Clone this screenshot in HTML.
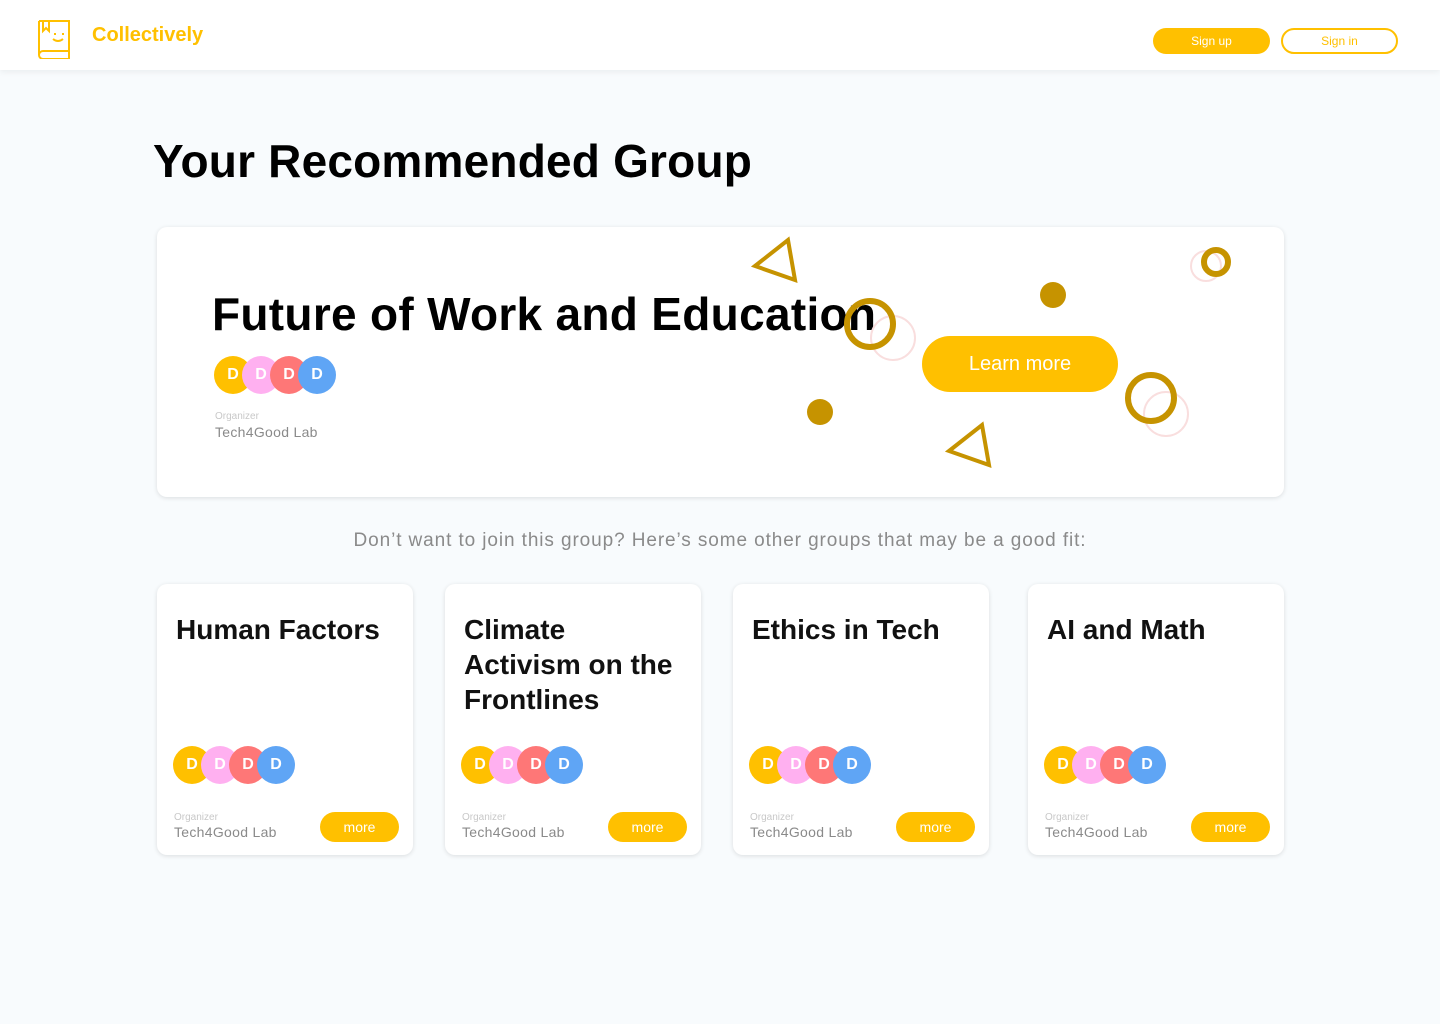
<!DOCTYPE html>
<html><head><style>
*{margin:0;padding:0;box-sizing:border-box}
body{width:1440px;height:1024px;background:#f8fbfd;font-family:"Liberation Sans",Roboto,sans-serif;position:relative;overflow:hidden}
.hdr{position:absolute;left:0;top:0;width:1440px;height:70px;background:#fff;box-shadow:0 2px 6px rgba(0,0,0,.06)}
.brand{position:absolute;left:92px;top:24px;color:#ffc000;font-size:20px;font-weight:bold}
.btn{position:absolute;border-radius:14px;font-size:12px;text-align:center;line-height:26px}
h1{position:absolute;left:153px;top:134px;font-size:46px;font-weight:bold;color:#000;letter-spacing:.2px}
.card{position:absolute;background:#fff;border-radius:10px;box-shadow:0 1px 5px rgba(0,0,0,.12)}
.av{position:absolute;width:38px;height:38px;border-radius:50%;color:#fff;font-weight:bold;font-size:16px;text-align:center;line-height:38px}
.org{position:absolute;font-size:10px;color:#c8c8c8}
.lab{position:absolute;font-size:14px;color:#8a8a8a;letter-spacing:.3px}
.ct{position:absolute;left:19px;top:28px;font-size:28px;font-weight:bold;line-height:35px;color:#111;width:215px}
.more{position:absolute;right:14px;top:228px;width:79px;height:30px;border-radius:15px;background:#ffc000;color:#fff;font-size:14px;text-align:center;line-height:30px}
</style></head><body>
<div class="hdr">
<svg style="position:absolute;left:37px;top:19px" width="34" height="40" viewBox="0 0 34 40" fill="none" stroke="#ffc000" stroke-width="2"><path d="M2 2h30v30H6a4 4 0 0 0 0 8h26v-8M2 2v34"/><path d="M6 2v10l3-3 3 3V2"/><path d="M18 14v2M26 14v2M16 20q5 4 10 0"/></svg>
<div class="brand">Collectively</div>
<div class="btn" style="left:1153px;top:28px;width:117px;height:26px;background:#ffc000;color:#fff">Sign up</div>
<div class="btn" style="left:1281px;top:28px;width:117px;height:26px;border:2px solid #ffc000;color:#ffc000;line-height:22px">Sign in</div>
</div>
<h1>Your Recommended Group</h1>
<div class="card" style="left:157px;top:227px;width:1127px;height:270px">
<div style="position:absolute;left:55px;top:60px;font-size:46px;font-weight:bold;color:#000;letter-spacing:.3px">Future of Work and Education</div>
<div class="av" style="left:57px;top:129px;background:#ffc000">D</div>
<div class="av" style="left:85px;top:129px;background:#ffb0f0">D</div>
<div class="av" style="left:113px;top:129px;background:#fe7777">D</div>
<div class="av" style="left:141px;top:129px;background:#5fa5f5">D</div>
<div class="org" style="left:58px;top:184px">Organizer</div>
<div class="lab" style="left:58px;top:197px">Tech4Good Lab</div>
<div style="position:absolute;left:765px;top:109px;width:196px;height:56px;border-radius:28px;background:#ffc000;color:#fff;font-size:20px;text-align:center;line-height:56px">Learn more</div>
</div>
<svg style="position:absolute;left:0;top:0" width="1440" height="1024" fill="none">
<g stroke="#f9dede" stroke-width="2"><circle cx="893" cy="338" r="22"/><circle cx="1166" cy="414" r="22"/><circle cx="1206" cy="266" r="15"/></g>
<g stroke="#c69300" stroke-width="6"><circle cx="870" cy="324" r="23"/><circle cx="1151" cy="398" r="23"/><circle cx="1216" cy="262" r="12"/></g>
<g fill="#c69300"><circle cx="1053" cy="295" r="13"/><circle cx="820" cy="412" r="13"/></g>
<g stroke="#c69300" stroke-width="4"><path d="M788 240l7 40-40-14z"/><path d="M982 425l7 40-40-14z"/></g>
</svg>
<div style="position:absolute;left:0;width:1440px;top:530px;text-align:center;font-size:19px;color:#8a8a8a;letter-spacing:.9px">Don’t want to join this group? Here’s some other groups that may be a good fit:</div>

<div class="card" style="left:157px;top:584px;width:256px;height:271px"><div class="ct">Human Factors</div>
<div class="av" style="left:16px;top:162px;background:#ffc000">D</div><div class="av" style="left:44px;top:162px;background:#ffb0f0">D</div><div class="av" style="left:72px;top:162px;background:#fe7777">D</div><div class="av" style="left:100px;top:162px;background:#5fa5f5">D</div>
<div class="org" style="left:17px;top:228px">Organizer</div><div class="lab" style="left:17px;top:240px">Tech4Good Lab</div><div class="more">more</div></div>

<div class="card" style="left:445px;top:584px;width:256px;height:271px"><div class="ct">Climate Activism on the Frontlines</div>
<div class="av" style="left:16px;top:162px;background:#ffc000">D</div><div class="av" style="left:44px;top:162px;background:#ffb0f0">D</div><div class="av" style="left:72px;top:162px;background:#fe7777">D</div><div class="av" style="left:100px;top:162px;background:#5fa5f5">D</div>
<div class="org" style="left:17px;top:228px">Organizer</div><div class="lab" style="left:17px;top:240px">Tech4Good Lab</div><div class="more">more</div></div>

<div class="card" style="left:733px;top:584px;width:256px;height:271px"><div class="ct">Ethics in Tech</div>
<div class="av" style="left:16px;top:162px;background:#ffc000">D</div><div class="av" style="left:44px;top:162px;background:#ffb0f0">D</div><div class="av" style="left:72px;top:162px;background:#fe7777">D</div><div class="av" style="left:100px;top:162px;background:#5fa5f5">D</div>
<div class="org" style="left:17px;top:228px">Organizer</div><div class="lab" style="left:17px;top:240px">Tech4Good Lab</div><div class="more">more</div></div>

<div class="card" style="left:1028px;top:584px;width:256px;height:271px"><div class="ct">AI and Math</div>
<div class="av" style="left:16px;top:162px;background:#ffc000">D</div><div class="av" style="left:44px;top:162px;background:#ffb0f0">D</div><div class="av" style="left:72px;top:162px;background:#fe7777">D</div><div class="av" style="left:100px;top:162px;background:#5fa5f5">D</div>
<div class="org" style="left:17px;top:228px">Organizer</div><div class="lab" style="left:17px;top:240px">Tech4Good Lab</div><div class="more">more</div></div>
</body></html>
